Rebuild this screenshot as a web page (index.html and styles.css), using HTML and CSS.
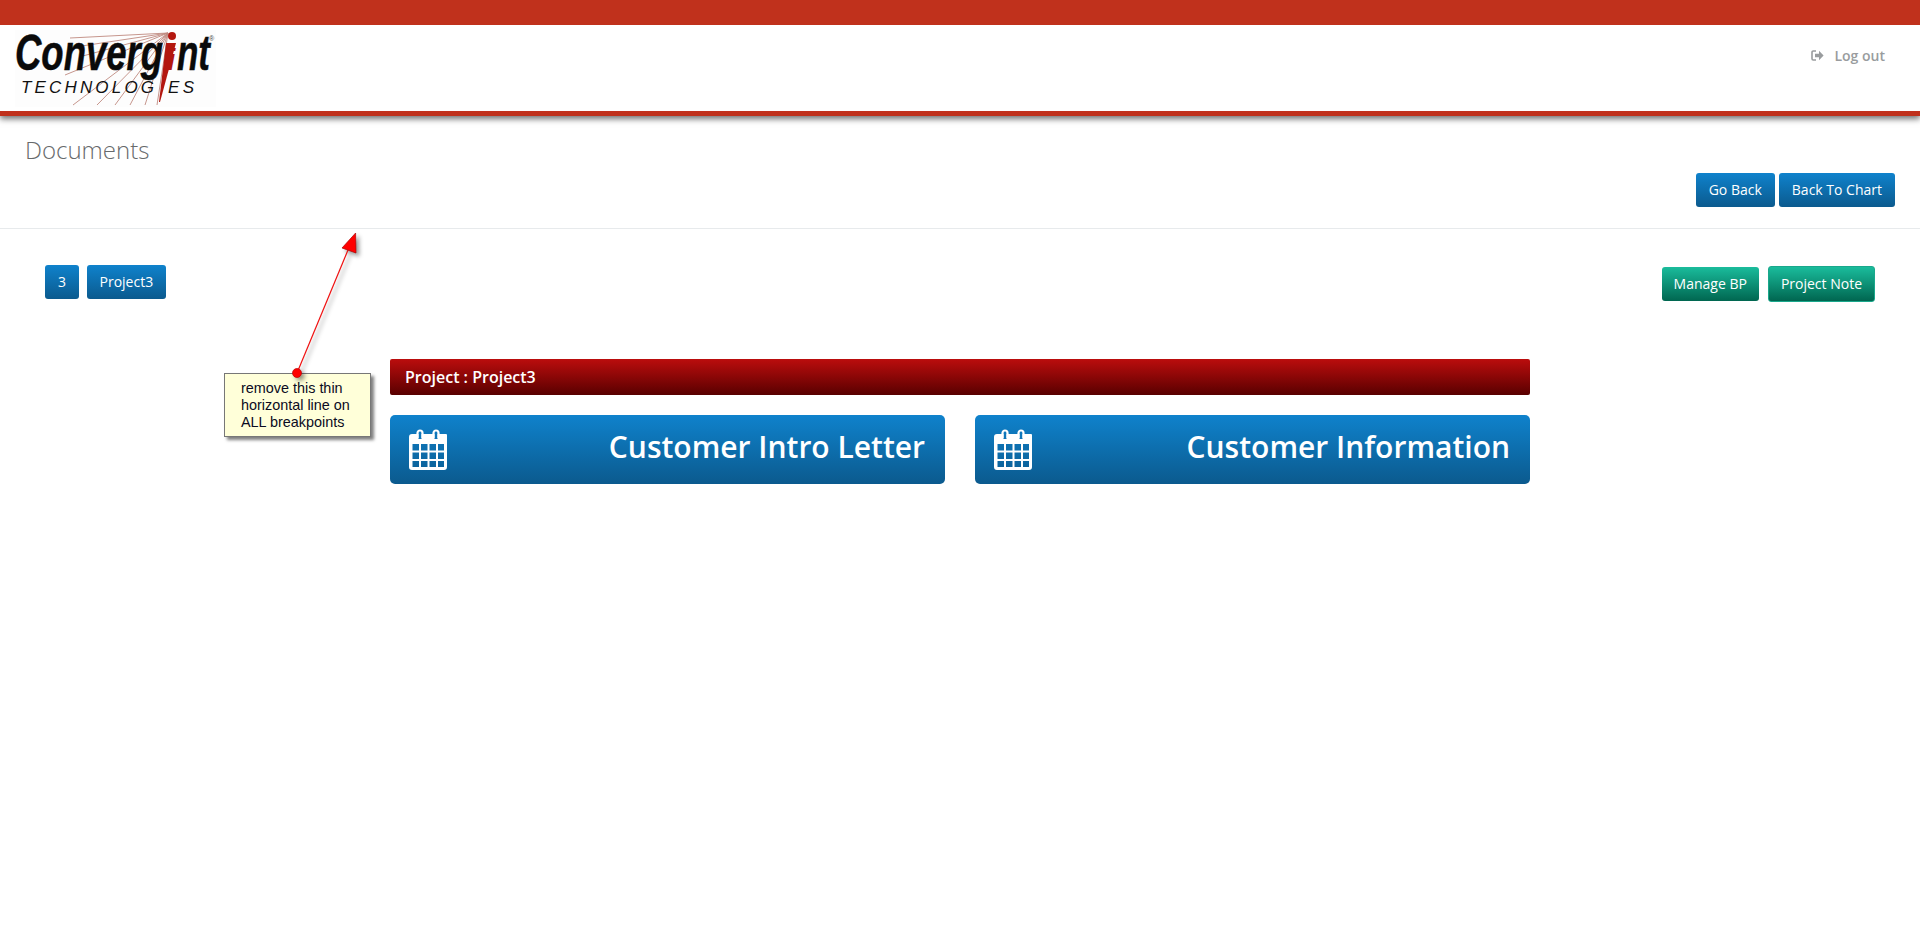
FILE: index.html
```html
<!DOCTYPE html>
<html lang="en">
<head>
<meta charset="utf-8">
<title>Documents</title>
<link rel="stylesheet" href="styles.css">
</head>
<body>
<header class="site-header">
  <div class="top-strip"></div>
  <div class="brand-row">
    <a class="logo" href="#" aria-label="Convergint Technologies">
      <svg class="logo-svg" width="201" height="77" viewBox="0 0 201 77">
        <rect width="201" height="77" fill="#fdfdfd"/>
        <path class="logo-rays" d="M153 3 55 8M153 3 60 17M153 3 64 27M153 3 50 45M153 3 58 75M153 3 82 75M153 3 100 75M153 3 115 75M153 3 130 75M153 3 142 75"/>
        <text class="logo-main" transform="translate(0 40) scale(.73 1)">Converg</text>
        <text class="logo-main logo-i" x="152" y="40">i</text>
        <text class="logo-main" transform="translate(162 40) scale(.7 1)">nt</text>
        <polygon points="151,13 161,13 145,72 144,72" fill="#b3170f"/>
        <circle cx="157" cy="6" r="4" fill="#b3170f"/>
        <text class="logo-sub" x="6" y="63" textLength="133" lengthAdjust="spacing">TECHNOLOG</text>
        <text class="logo-sub" x="153" y="63" textLength="26" lengthAdjust="spacing">ES</text>
        <text class="logo-reg" x="194" y="11">®</text>
      </svg>
    </a>
    <a class="logout" href="#">
      <svg class="logout-icon" width="13" height="11" viewBox="0 0 13 11">
        <path d="M5 1H2.2A1.2 1.2 0 0 0 1 2.2v6.600A1.2 1.2 0 0 0 2.2 10H5" fill="none" stroke="currentColor" stroke-width="1.6"/>
        <path d="M4 3.700h4V.8l4.600 4.700L8 10.200V7.300H4z" fill="currentColor"/>
      </svg>
      Log out
    </a>
  </div>
  <div class="bottom-strip"></div>
</header>

<section class="page-head">
  <h1 class="page-title">Documents</h1>
  <div class="page-actions">
    <a class="btn btn-blue" href="#">Go Back</a>
    <a class="btn btn-blue" href="#">Back To Chart</a>
  </div>
</section>

<section class="toolbar">
  <div class="toolbar-group toolbar-left">
    <a class="btn btn-blue" href="#">3</a>
    <a class="btn btn-blue btn-tight" href="#">Project3</a>
  </div>
  <div class="toolbar-group toolbar-right">
    <a class="btn btn-green" href="#">Manage BP</a>
    <a class="btn btn-green btn-bordered" href="#">Project Note</a>
  </div>
</section>

<main class="content">
  <h2 class="project-bar">Project : Project3</h2>
  <div class="cards">
    <a class="card" href="#">
      <svg class="cal" width="38" height="41" viewBox="0 0 38 41">
        <use href="#calendar"/>
      </svg>
      <span class="card-title">Customer Intro Letter</span>
    </a>
    <a class="card" href="#">
      <svg class="cal" width="38" height="41" viewBox="0 0 38 41">
        <use href="#calendar"/>
      </svg>
      <span class="card-title">Customer Information</span>
    </a>
  </div>
</main>

<svg class="defs" width="0" height="0">
  <defs>
    <g id="calendar">
      <path fill="#fff" fill-rule="evenodd" d="M3 5h34a1 1 0 0 1 1 1v0 32a3 3 0 0 1-3 3H3a3 3 0 0 1-3-3V8a3 3 0 0 1 3-3zM9.500 5v5h3V5zM25.500 5v5h3V5zM3.500 15v6.500h6.500V15zM12 15v6.500h6.500V15zM20.500 15v6.500h6.500V15zM29 15v6.500h6V15zM3.500 23.500V30h6.500v-6.500zM12 23.500V30h6.500v-6.500zM20.500 23.500V30h6.500v-6.500zM29 23.500V30h6v-6.500zM3.500 32v6h6.500v-6zM12 32v6h6.500v-6zM20.500 32v6h6.500v-6zM29 32v6h6v-6z"/>
      <path fill="none" stroke="#fff" stroke-width="2.200" d="M8.500 9V4a2.500 2.500 0 0 1 5 0v5M24.500 9V4a2.500 2.500 0 0 1 5 0v5"/>
    </g>
  </defs>
</svg>

<svg class="callout-arrow" width="90" height="160" viewBox="0 0 90 160">
  <path class="arrow-line" d="M17 141 68 18"/>
  <path class="arrow-head" d="M75.600 1 76 21 62 16z"/>
  <circle class="arrow-dot" cx="17" cy="141" r="4.500"/>
</svg>
<div class="callout">remove this thin horizontal line on ALL breakpoints</div>
</body>
</html>
```
FILE: styles.css
```css
* { box-sizing: border-box; }
html, body { margin: 0; padding: 0; }
body {
  position: relative;
  min-height: 950px;
  background: #fff;
  font-family: "Open Sans", "Liberation Sans", sans-serif;
  font-size: 14px;
  color: #333;
}
a { text-decoration: none; }

/* header */
.site-header { box-shadow: 0 3px 6px rgba(0, 0, 0, .55); }
.top-strip { height: 25px; background: #c0311c; }
.bottom-strip { height: 5px; background: #c0311c; }
.brand-row {
  height: 86px;
  display: flex;
  justify-content: space-between;
  align-items: flex-start;
  padding: 5px 35px 0 15px;
}
.logo { display: block; height: 77px; }
.logo-svg { display: block; }
.logo-rays { fill: none; stroke: #c08a80; stroke-width: .9; }
.logo-main {
  font-family: "Liberation Sans", sans-serif;
  font-weight: 700;
  font-style: italic;
  font-size: 50px;
  fill: #0a0a0a;
  stroke: #0a0a0a;
  stroke-width: .5px;
}
.logo-main.logo-i { fill: #b3170f; stroke: none; font-size: 30px; }
.logo-sub {
  font-family: "Liberation Sans", sans-serif;
  font-style: italic;
  font-size: 17px;
  fill: #111;
}
.logo-reg {
  font-family: "Liberation Sans", sans-serif;
  font-size: 7px;
  fill: #444;
}
.logout {
  display: flex;
  align-items: center;
  gap: 10px;
  margin-top: 16px;
  font-weight: 600;
  font-size: 14px;
  line-height: 19px;
  color: #999c9e;
}

/* page head */
.page-head {
  height: 113px;
  padding: 19px 25px 0 25px;
  border-bottom: 1px solid #e7eaec;
}
.page-title {
  margin: 0;
  font-weight: 300;
  font-size: 24px;
  line-height: 30px;
  color: #676a6c;
}
.page-actions {
  display: flex;
  justify-content: flex-end;
  gap: 4px;
  margin-top: 8px;
}

/* buttons */
.btn {
  display: block;
  height: 34px;
  padding: 0 13px;
  border-radius: 3px;
  font-size: 14px;
  line-height: 34px;
  color: #fff;
  white-space: nowrap;
}
.btn-blue { background: linear-gradient(#0f82cc, #0b5a8e); }
.btn-tight { padding: 0 12.500px; }
.btn-green { background: linear-gradient(#1abc9c, #006650); padding: 0 12px; }
.btn-bordered {
  height: 36px;
  line-height: 34px;
  border: 1px solid #1aa88c;
}

/* toolbar */
.toolbar {
  display: flex;
  justify-content: space-between;
  align-items: flex-start;
  padding: 36px 45px 0;
  height: 130px;
}
.toolbar-group { display: flex; }
.toolbar-left { gap: 8px; }
.toolbar-right { gap: 9px; align-items: center; margin-top: 1px; }

/* content */
.content { width: 1140px; margin: 0 auto; }
.project-bar {
  margin: 0;
  height: 36px;
  padding: 0 15px;
  border-radius: 2px;
  background: linear-gradient(#bb0d0d, #590000);
  font-size: 16px;
  font-weight: 600;
  line-height: 36px;
  color: #fff;
}
.cards {
  display: grid;
  grid-template-columns: 555px 555px;
  justify-content: space-between;
  margin-top: 20px;
}
.card {
  display: flex;
  align-items: center;
  justify-content: space-between;
  height: 69px;
  padding: 0 20px 0 19px;
  border-radius: 5px;
  background: linear-gradient(#0f82cc, #0b5a8e);
  color: #fff;
}
.cal { display: block; }
.card-title { font-size: 30px; font-weight: 600; line-height: 40px; padding-bottom: 5px; }
.defs { position: absolute; }

/* review annotation */
.callout {
  position: absolute;
  left: 224px;
  top: 373px;
  width: 147px;
  height: 64px;
  padding: 6px 10px 0 16px;
  background: #ffffd9;
  border: 1px solid #777;
  box-shadow: 3px 3px 3px rgba(0, 0, 0, .5);
  font-family: "Liberation Sans", Arial, sans-serif;
  font-size: 14.400px;
  line-height: 17px;
  color: #0b0b22;
}
.callout-arrow {
  position: absolute;
  left: 280px;
  top: 232px;
  overflow: visible;
  z-index: 2;
  filter: drop-shadow(3px 3px 2px rgba(0, 0, 0, .4));
}
.arrow-line { stroke: #f01010; stroke-width: 1.2; fill: none; }
.arrow-head { fill: #f00; stroke: #a00; stroke-width: .7; }
.arrow-dot { fill: #f00; stroke: #b00; stroke-width: .7; }
```
